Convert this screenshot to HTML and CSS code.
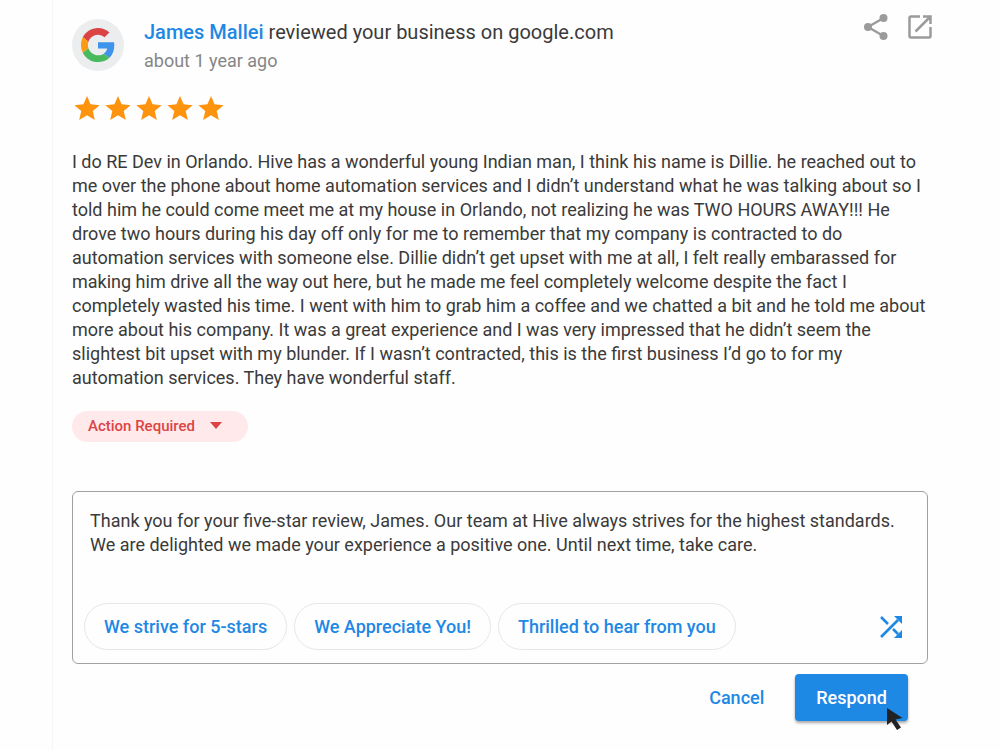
FILE: index.html
```html
<!DOCTYPE html>
<html lang="en">

<head>
    <meta charset="UTF-8">
    <meta name="viewport" content="width=device-width, initial-scale=1.0">
    <title>Review</title>
    <link rel="stylesheet" href="styles.css">
</head>

<body>
    <main class="review">
        <header class="review-header">
            <div class="avatar">
                <svg viewBox="0 0 48 48" width="34" height="34" aria-label="Google">
                    <path fill="#db4444" d="M24 9.5c3.54 0 6.71 1.22 9.21 3.6l6.85-6.85C35.9 2.38 30.47 0 24 0 14.62 0 6.51 5.38 2.56 13.22l7.98 6.19C12.43 13.72 17.74 9.5 24 9.5z"/>
                    <path fill="#3d94ea" d="M46.98 24.55c0-1.57-.15-3.09-.38-4.55H24v9.02h12.94c-.58 2.96-2.26 5.48-4.78 7.18l7.73 6c4.51-4.18 7.09-10.36 7.09-17.65z"/>
                    <path fill="#fd9a14" d="M10.53 28.59c-.48-1.45-.76-2.99-.76-4.59s.27-3.14.76-4.59l-7.98-6.19C.92 16.46 0 20.12 0 24c0 3.88.92 7.54 2.56 10.78l7.97-6.19z"/>
                    <path fill="#48b95c" d="M24 48c6.48 0 11.93-2.13 15.89-5.81l-7.73-6c-2.15 1.45-4.92 2.3-8.16 2.3-6.26 0-11.57-4.22-13.47-9.91l-7.98 6.19C6.51 42.62 14.62 48 24 48z"/>
                </svg>
            </div>
            <div class="review-info">
                <h1><a href="#">James Mallei</a> reviewed your business on google.com</h1>
                <p class="review-date">about 1 year ago</p>
            </div>
            <div class="header-actions">
                <button type="button" class="icon-button" aria-label="Share">
                    <svg viewBox="0 0 24 26" width="24" height="26">
                        <path fill="none" stroke="currentColor" stroke-width="2.4" d="M19.5 4 4 13l15.5 9"/>
                        <circle cx="19.5" cy="4" r="4" fill="currentColor"/>
                        <circle cx="4" cy="13" r="4" fill="currentColor"/>
                        <circle cx="19.5" cy="22" r="4" fill="currentColor"/>
                    </svg>
                </button>
                <button type="button" class="icon-button" aria-label="Open in new tab">
                    <svg viewBox="0 0 24 24" width="24" height="24">
                        <g fill="none" stroke="currentColor" stroke-width="2.5">
                            <path d="M12 1.5H3Q1.500 1.500 1.500 3v18q0 1.500 1.500 1.500h18q1.500 0 1.500-1.500V12"/>
                            <path d="M15 1.500h7.500V9M22 2 7.500 16.500"/>
                        </g>
                    </svg>
                </button>
            </div>
        </header>

        <div class="stars" role="img" aria-label="5 out of 5 stars">
            <svg viewBox="2 2 20 19" width="26" height="24"><path d="M12 17.27 18.18 21l-1.64-7.03L22 9.24l-7.19-.61L12 2 9.19 8.63 2 9.24l5.46 4.73L5.82 21z"/></svg>
            <svg viewBox="2 2 20 19" width="26" height="24"><path d="M12 17.27 18.18 21l-1.64-7.03L22 9.24l-7.19-.61L12 2 9.19 8.63 2 9.24l5.46 4.73L5.82 21z"/></svg>
            <svg viewBox="2 2 20 19" width="26" height="24"><path d="M12 17.27 18.18 21l-1.64-7.03L22 9.24l-7.19-.61L12 2 9.19 8.63 2 9.24l5.46 4.73L5.82 21z"/></svg>
            <svg viewBox="2 2 20 19" width="26" height="24"><path d="M12 17.27 18.18 21l-1.64-7.03L22 9.24l-7.19-.61L12 2 9.19 8.63 2 9.24l5.46 4.73L5.82 21z"/></svg>
            <svg viewBox="2 2 20 19" width="26" height="24"><path d="M12 17.27 18.18 21l-1.64-7.03L22 9.24l-7.19-.61L12 2 9.19 8.63 2 9.24l5.46 4.73L5.82 21z"/></svg>
        </div>

        <p class="review-text">I do RE Dev in Orlando. Hive has a wonderful young Indian man, I think his name is Dillie. he reached out to me over the phone about home automation services and I didn’t understand what he was talking about so I told him he could come meet me at my house in Orlando, not realizing he was TWO HOURS AWAY!!! He drove two hours during his day off only for me to remember that my company is contracted to do automation services with someone else. Dillie didn’t get upset with me at all, I felt really embarassed for making him drive all the way out here, but he made me feel completely welcome despite the fact I completely wasted his time. I went with him to grab him a coffee and we chatted a bit and he told me about more about his company. It was a great experience and I was very impressed that he didn’t seem the slightest bit upset with my blunder. If I wasn’t contracted, this is the first business I’d go to for my automation services. They have wonderful staff.</p>

        <button type="button" class="status">
            Action Required
            <svg viewBox="0 0 12 7" width="12" height="7"><path fill="currentColor" d="M0 0h12L6 7z"/></svg>
        </button>

        <form class="reply-form">
            <div class="reply-box">
                <textarea class="reply-text" rows="3" aria-label="Reply">Thank you for your five-star review, James. Our team at Hive always strives for the highest standards. We are delighted we made your experience a positive one. Until next time, take care.</textarea>
                <div class="suggestions">
                    <button type="button" class="chip">We strive for 5-stars</button>
                    <button type="button" class="chip">We Appreciate You!</button>
                    <button type="button" class="chip">Thrilled to hear from you</button>
                    <button type="button" class="shuffle" aria-label="Shuffle suggestions">
                        <svg viewBox="0 0 22 22" width="22" height="22">
                            <path fill="none" stroke="currentColor" stroke-width="2.6" d="M1 21 18 4M1 1l7 7M13 13l5 5"/>
                            <path fill="currentColor" d="M14 0h8v8zM22 14v8h-8z"/>
                        </svg>
                    </button>
                </div>
            </div>
            <div class="form-actions">
                <button type="button" class="cancel">Cancel</button>
                <button type="button" class="respond">
                    Respond
                    <svg class="cursor" viewBox="0 0 16 22" width="16" height="22"><path fill="#222" d="M0 0v17l4.500-3.500 5.500 8.500 4-2.500-5.500-8 7-1.500z"/></svg>
                </button>
            </div>
        </form>
    </main>
</body>

</html>
```
FILE: styles.css
```css
* {
    margin: 0;
    padding: 0;
    box-sizing: border-box;
}

body {
    background: #fefefe;
    color: #3a3a3a;
    font-family: Roboto, "Liberation Sans", sans-serif;
    font-size: 18px;
    line-height: 24px;
}

button,
textarea {
    border: none;
    background: none;
    color: inherit;
    font: inherit;
}

button {
    cursor: pointer;
}

svg {
    display: block;
}

.review {
    min-height: 100vh;
    margin-left: 52px;
    padding: 14px 72px 20px 19px;
    border-left: 1px solid #f6f6f6;
}

.review-header {
    display: flex;
    align-items: flex-start;
}

.avatar {
    display: flex;
    align-items: center;
    justify-content: center;
    width: 52px;
    height: 52px;
    margin: 5px 20px 0 0;
    border-radius: 50%;
    background: #ebedef;
}

.review-info {
    flex: 1;
    padding-top: 4px;
}

.review-info h1 {
    font-size: 20px;
    font-weight: 400;
    line-height: 28px;
}

.review-info a {
    color: #1e88e5;
    font-weight: 500;
    text-decoration: none;
}

.review-date {
    color: #868686;
    line-height: 30px;
}

.header-actions {
    display: flex;
    align-items: center;
    gap: 20px;
    margin-right: -4px;
}

.icon-button {
    color: #9b9b9b;
}

.stars {
    display: flex;
    gap: 5px;
    margin: 20px 0 0 2px;
    fill: #fe930d;
}

.review-text {
    margin-top: 30px;
}

.status {
    display: flex;
    align-items: center;
    gap: 15px;
    height: 31px;
    margin-top: 21px;
    padding: 0 26px 2px 16px;
    border-radius: 16px;
    background: #ffe9eb;
    color: #dc4444;
    font-size: 15px;
    font-weight: 500;
}

.reply-form {
    margin-top: 49px;
}

.reply-box {
    padding: 17px 11px 13px;
    border: 1px solid #a0a0a0;
    border-radius: 6px;
}

.reply-text {
    display: block;
    width: 100%;
    padding: 0 6px;
    outline: none;
    resize: none;
}

.suggestions {
    display: flex;
    align-items: center;
    gap: 7px;
    margin-top: 22px;
}

.chip {
    height: 47px;
    padding: 0 19px;
    border: 1px solid #e4e7e8;
    border-radius: 24px;
    color: #1e88e5;
    font-weight: 500;
}

.shuffle {
    margin-left: auto;
    margin-right: 14px;
    color: #1e88e5;
}

.form-actions {
    display: flex;
    justify-content: flex-end;
    gap: 11px;
    margin-top: 10px;
    padding-right: 20px;
}

.cancel,
.respond {
    height: 47px;
    padding: 0 20px;
    border-radius: 4px;
    color: #1e88e5;
    font-weight: 500;
}

.respond {
    position: relative;
    padding: 0 21px;
    background: #1e88e5;
    box-shadow: 0 2px 3px rgba(0, 0, 0, 0.35);
    color: #fff;
}

/* pointer resting on the button corner */
.cursor {
    position: absolute;
    right: 5px;
    bottom: -9px;
}
```
